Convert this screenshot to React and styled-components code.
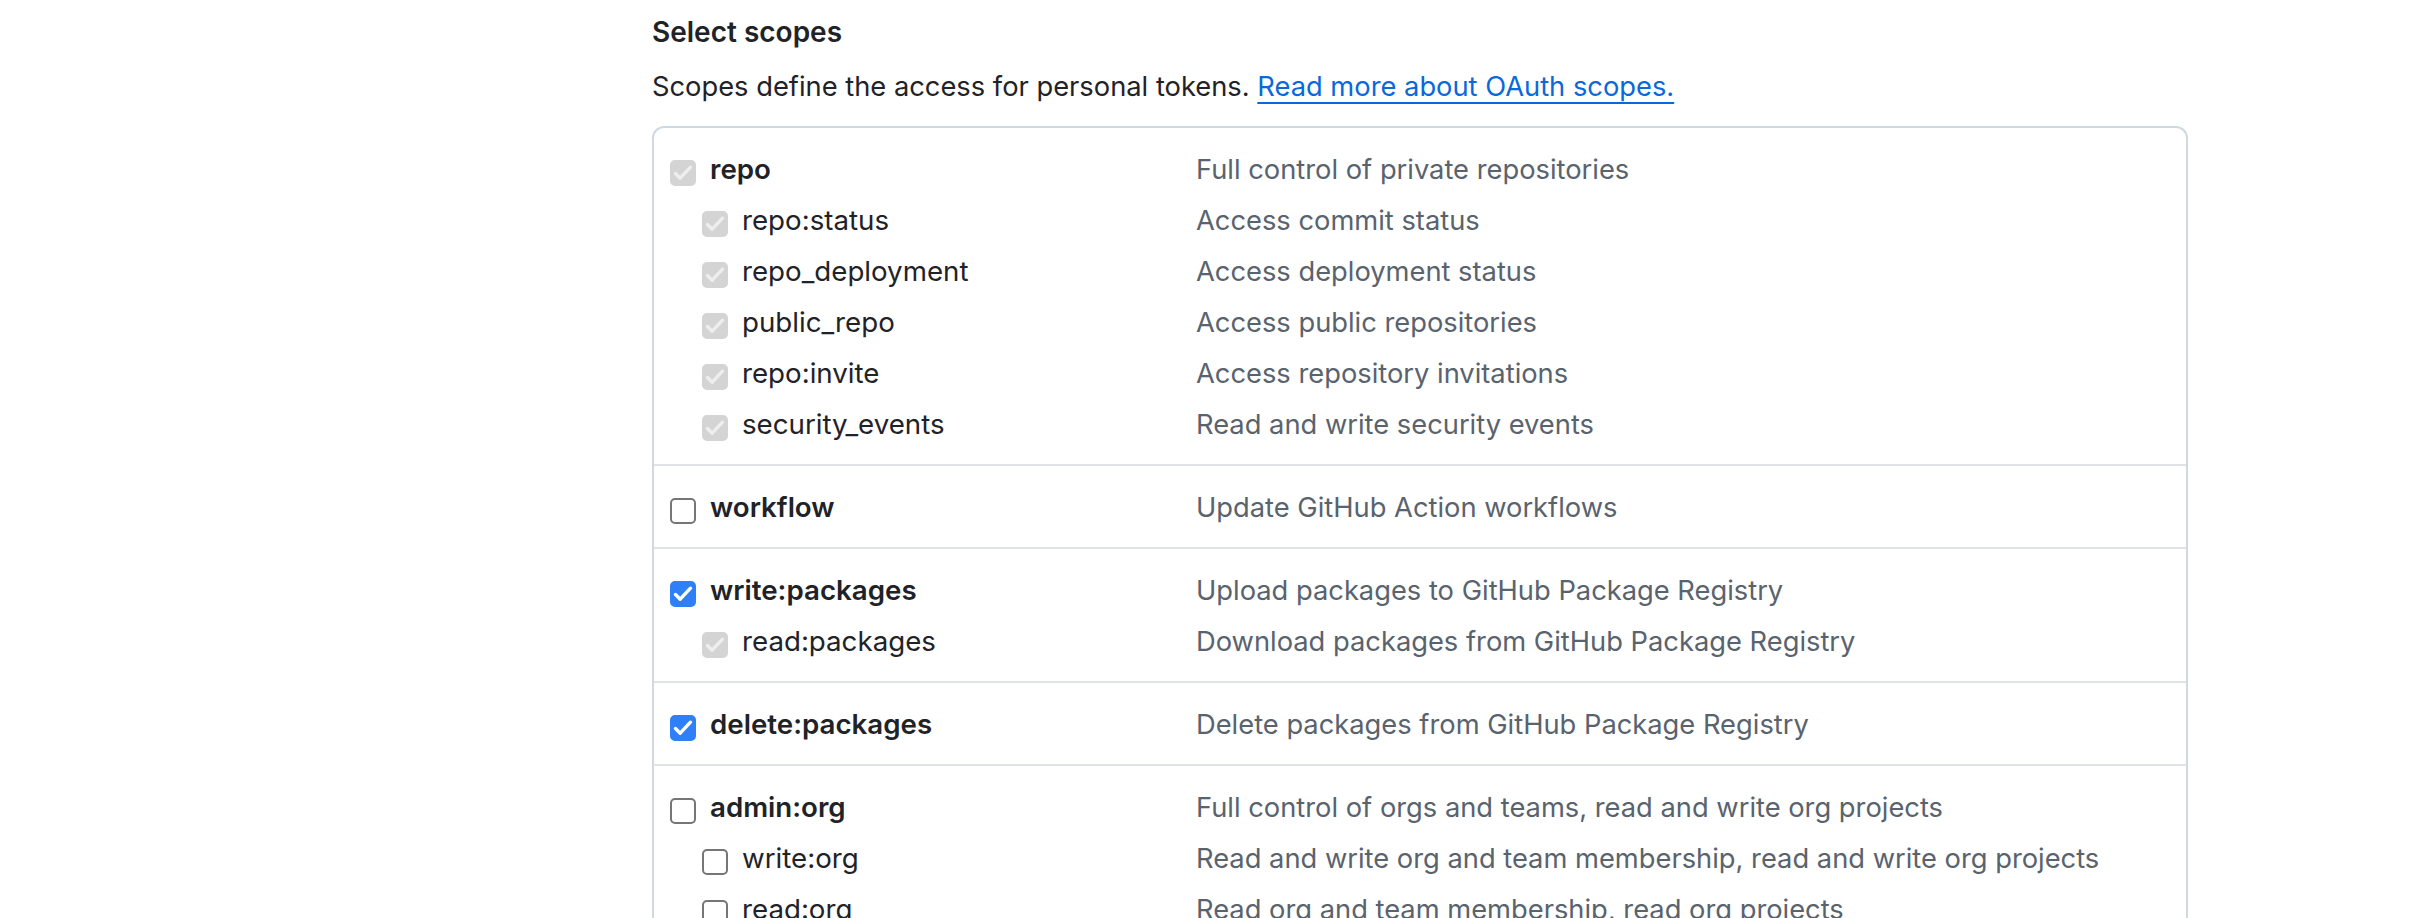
import React from 'react'
import styled, { createGlobalStyle } from 'styled-components'

const GlobalStyle = createGlobalStyle`
    body {
        margin: 0;
        background: #ffffff;
        font-family: Inter, "Noto Sans", sans-serif;
        color: #1f2328;
    }
`

const Page = styled.div`
    padding: 12px 0 0 652px;
    width: 1536px;
`

const Title = styled.h3`
    margin: 0;
    font-size: 28px;
    line-height: 40px;
    font-weight: 600;
`

const Intro = styled.p`
    margin: 15px 0 0;
    font-size: 27.3px;
    line-height: 40px;
`

const Link = styled.a`
    color: #0969da;
    text-decoration: underline;
    text-decoration-thickness: 2px;
    text-underline-offset: 6px;
`

const ScopeBox = styled.div`
    margin-top: 19px;
    border: 2px solid #d1d9e0;
    border-radius: 12px;
`

const Section = styled.div`
    padding: 16px 16px 14px;
    border-top: ${(p) => (p.$first ? 'none' : '2px solid #dfe3e8')};
`

const Row = styled.div`
    display: grid;
    grid-template-columns: 526px 1fr;
    height: 51px;
    align-items: center;
`

const Name = styled.label`
    display: flex;
    align-items: center;
    gap: 14px;
    padding-left: ${(p) => (p.$sub ? '32px' : '0')};
    font-size: 27.7px;
    line-height: 51px;
    font-weight: ${(p) => (p.$sub ? 400 : 600)};
    color: #1f2328;
`

const Description = styled.span`
    font-size: 27.3px;
    line-height: 51px;
    color: #59636e;
`

const boxColors = {
    checked: { bg: '#2f80f6', border: '#2f80f6', mark: '#ffffff' },
    disabled: { bg: '#d4d4d4', border: '#d4d4d4', mark: '#eeeeee' },
    unchecked: { bg: '#ffffff', border: '#767676', mark: 'transparent' },
}

const Box = styled.span`
    flex: none;
    box-sizing: border-box;
    width: 26px;
    height: 26px;
    margin-top: 6px;
    border-radius: 5px;
    border: 2px solid ${(p) => boxColors[p.$state].border};
    background: ${(p) => boxColors[p.$state].bg};
    display: flex;
    align-items: center;
    justify-content: center;
`

const Checkbox = ({ state }) => (
    <Box $state={state}>
        {state !== 'unchecked' && (
            <svg width="26" height="26" viewBox="0 0 26 26" style={{ margin: -2 }}>
                <path
                    d="M5.5 13.5 L10.2 18.2 L20.5 7.2"
                    fill="none"
                    stroke={boxColors[state].mark}
                    strokeWidth="3.4"
                    strokeLinecap="round"
                    strokeLinejoin="round"
                />
            </svg>
        )}
    </Box>
)

const sections = [
    [
        ['repo', 'Full control of private repositories', 'disabled', false],
        ['repo:status', 'Access commit status', 'disabled', true],
        ['repo_deployment', 'Access deployment status', 'disabled', true],
        ['public_repo', 'Access public repositories', 'disabled', true],
        ['repo:invite', 'Access repository invitations', 'disabled', true],
        ['security_events', 'Read and write security events', 'disabled', true],
    ],
    [['workflow', 'Update GitHub Action workflows', 'unchecked', false]],
    [
        ['write:packages', 'Upload packages to GitHub Package Registry', 'checked', false],
        ['read:packages', 'Download packages from GitHub Package Registry', 'disabled', true],
    ],
    [['delete:packages', 'Delete packages from GitHub Package Registry', 'checked', false]],
    [
        ['admin:org', 'Full control of orgs and teams, read and write org projects', 'unchecked', false],
        ['write:org', 'Read and write org and team membership, read and write org projects', 'unchecked', true],
        ['read:org', 'Read org and team membership, read org projects', 'unchecked', true],
    ],
]

const App = () => {
    return (
        <Page>
            <GlobalStyle />
            <Title>Select scopes</Title>
            <Intro>
                Scopes define the access for personal tokens.{' '}
                <Link href="#">Read more about OAuth scopes.</Link>
            </Intro>
            <ScopeBox>
                {sections.map((rows, i) => (
                    <Section key={i} $first={i === 0}>
                        {rows.map(([name, desc, state, sub]) => (
                            <Row key={name}>
                                <Name $sub={sub}>
                                    <Checkbox state={state} />
                                    {name}
                                </Name>
                                <Description>{desc}</Description>
                            </Row>
                        ))}
                    </Section>
                ))}
            </ScopeBox>
        </Page>
    )
}

export default App
